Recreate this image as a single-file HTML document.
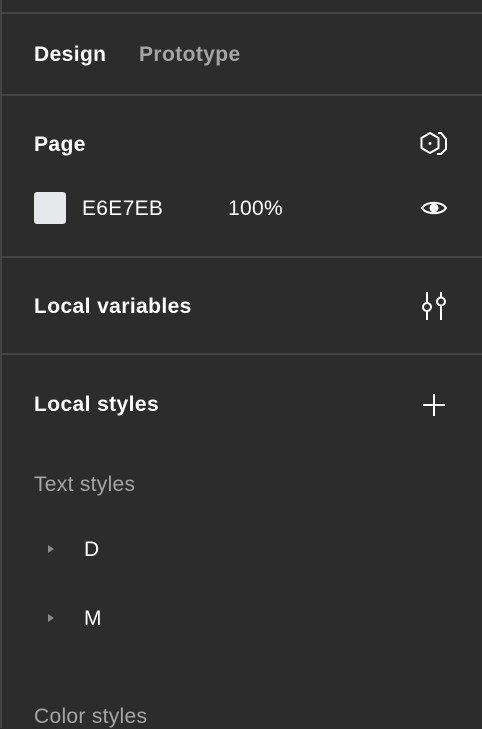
<!DOCTYPE html><html><head><style>
body{margin:0;width:482px;height:728px;background:#2c2c2c;overflow:hidden;font-family:"Liberation Sans",sans-serif;color:#fff;position:relative}
.t{position:absolute;white-space:nowrap;letter-spacing:0.3px;font-size:21px}
.b{font-weight:bold;letter-spacing:0.4px}
.l{position:absolute;left:2px;right:0;height:2px;background:#444}
svg{position:absolute}
</style></head><body>
<div style="position:absolute;left:0;top:0;width:2px;height:728px;background:#444"></div>
<div class="l" style="top:12px;left:0"></div>
<div class="l" style="top:94px"></div>
<div class="l" style="top:256px"></div>
<div class="l" style="top:353px"></div>
<div class="t b" style="left:34px;top:43px">Design</div>
<div class="t b" style="left:139px;top:43px;color:#a5a5a5">Prototype</div>
<div class="t b" style="left:34px;top:133px">Page</div>
<svg style="left:418px;top:130px" width="32" height="30" viewBox="0 0 32 30" fill="none" stroke="#fff" stroke-width="2"><path d="M12 3l8.5 5v10l-8.5 5-8.5-5V8z"/><path d="M20 3h3l5 6v10l-5 5h-4"/><circle cx="12" cy="13.5" r="1.4" fill="#fff" stroke="none"/></svg>
<div style="position:absolute;left:34px;top:192px;width:32px;height:32px;background:#e6e7eb;border-radius:3px"></div>
<div class="t" style="left:82px;top:197px">E6E7EB</div>
<div class="t" style="left:228px;top:197px">100%</div>
<svg style="left:420px;top:198px" width="28" height="20" viewBox="0 0 28 20" fill="none" stroke="#fff" stroke-width="2"><path d="M2 10C6 3 22 3 26 10C22 17 6 17 2 10z"/><circle cx="14" cy="10" r="3.5" fill="#fff"/></svg>
<div class="t b" style="left:34px;top:295px">Local variables</div>
<svg style="left:420px;top:290px" width="28" height="32" viewBox="0 0 28 32" fill="none" stroke="#fff" stroke-width="2"><path d="M7 2v10M7 21v9M21 2v5M21 16v14"/><circle cx="7" cy="17" r="4"/><circle cx="21" cy="11.5" r="4"/></svg>
<div class="t b" style="left:34px;top:393px">Local styles</div>
<svg style="left:422px;top:393px" width="24" height="24" viewBox="0 0 24 24" stroke="#fff" stroke-width="2"><path d="M12 1v22M1 12h22"/></svg>
<div class="t" style="left:34px;top:473px;color:#a5a5a5">Text styles</div>
<svg style="left:47px;top:544px" width="8" height="10"><path d="M1 1l6 4-6 4z" fill="#8a8a8a"/></svg>
<div class="t" style="left:84px;top:538px">D</div>
<svg style="left:47px;top:613px" width="8" height="10"><path d="M1 1l6 4-6 4z" fill="#8a8a8a"/></svg>
<div class="t" style="left:84px;top:607px">M</div>
<div class="t" style="left:34px;top:705px;color:#a5a5a5">Color styles</div>
</body></html>
